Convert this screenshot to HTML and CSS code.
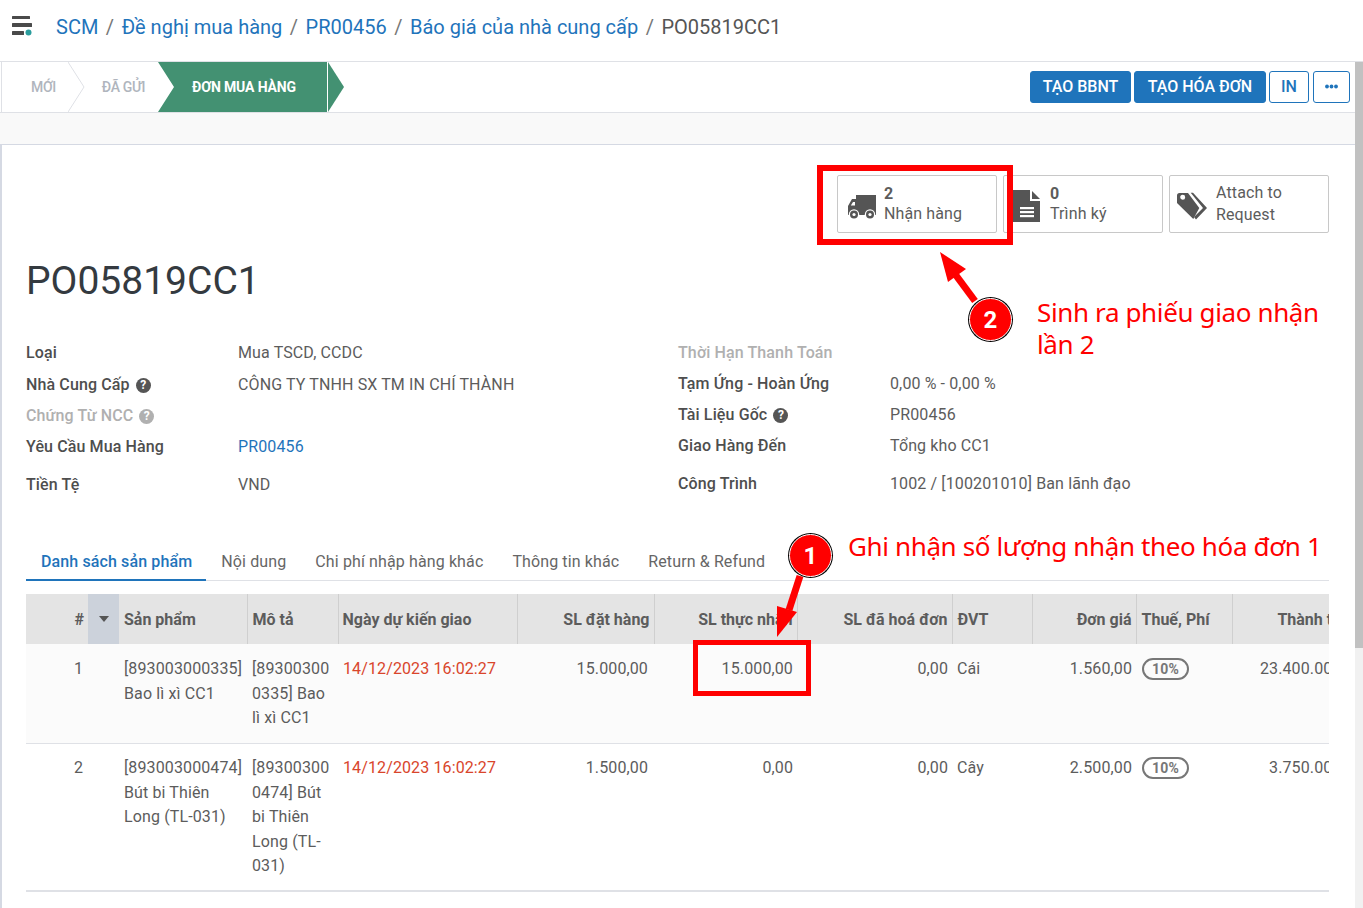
FILE: index.html
```html
<!DOCTYPE html>
<html lang="vi">
  <head>
    <meta charset="UTF-8" />
    <meta name="viewport" content="width=device-width, initial-scale=1.0" />
    <title>PO05819CC1</title>
    <link rel="stylesheet" href="styles.css">
  </head>
  <body>
    <header class="topbar">
      <svg class="menu-icon" width="24" height="24" viewBox="0 0 24 24">
        <rect x="0" y="4" width="18" height="3" rx="0.5" fill="#4a4a4a" />
        <rect x="0" y="11" width="20" height="4" rx="0.5" fill="#4a4a4a" />
        <rect x="0" y="19" width="12" height="4" rx="0.5" fill="#4a4a4a" />
        <circle cx="16.5" cy="20.5" r="3" fill="#2a9d9d" />
      </svg>
      <nav class="breadcrumb">
        <a href="#">SCM</a><span class="sep">/</span><a href="#">Đề nghị mua hàng</a><span class="sep">/</span><a href="#">PR00456</a><span class="sep">/</span><a href="#">Báo giá của nhà cung cấp</a><span class="sep">/</span><span class="current">PO05819CC1</span>
      </nav>
    </header>

    <div class="body-wrap">
      <main class="main">
        <div class="controlbar">
          <div class="stages">
            <div class="stage stage-new">MỚI</div>
            <div class="stage stage-sent">ĐÃ GỬI</div>
            <div class="stage stage-active">ĐƠN MUA HÀNG</div>
            <div class="stage-tail"></div>
            <svg class="chevron" width="17" height="50" viewBox="0 0 17 50"><path d="M0 0L16 25L0 50" fill="none" stroke="#dfe1e6" /></svg>
          </div>
          <div class="actions">
            <button class="btn btn-primary btn-bbnt">TẠO BBNT</button>
            <button class="btn btn-primary btn-invoice">TẠO HÓA ĐƠN</button>
            <button class="btn btn-outline btn-print">IN</button>
            <button class="btn btn-outline btn-more">
              <svg width="13" height="5" viewBox="0 0 13 5">
                <circle cx="2" cy="2.500" r="1.900" fill="#1f74bb" />
                <circle cx="6.500" cy="2.500" r="1.900" fill="#1f74bb" />
                <circle cx="11" cy="2.500" r="1.900" fill="#1f74bb" />
              </svg>
            </button>
          </div>
        </div>
        <div class="strip"></div>

        <section class="sheet">
          <div class="smart-buttons">
            <div class="smart-btn">
              <svg class="smart-icon" width="38" height="40" viewBox="0 0 38 40">
                <path d="M10 11H30V31H2V22L6 15H10Z" fill="#555" />
                <path d="M4.800 21.500L7 18H9V21.500Z" fill="#fff" />
                <circle cx="8" cy="30.500" r="5.200" fill="#fff" />
                <circle cx="24" cy="30.500" r="5.200" fill="#fff" />
                <circle cx="8" cy="30.500" r="4" fill="#555" />
                <circle cx="24" cy="30.500" r="4" fill="#555" />
                <circle cx="8" cy="30.500" r="1.600" fill="#fff" />
                <circle cx="24" cy="30.500" r="1.600" fill="#fff" />
              </svg>
              <div class="smart-text"><strong>2</strong><span>Nhận hàng</span></div>
            </div>
            <div class="smart-btn">
              <svg class="smart-icon" width="38" height="40" viewBox="0 0 38 40">
                <path d="M1 6H18V17H28V38H1Z" fill="#555" />
                <path d="M20 7V15H28Z" fill="#555" />
                <rect x="8" y="23" width="14" height="2.200" fill="#fff" />
                <rect x="8" y="27" width="14" height="2.200" fill="#fff" />
                <rect x="8" y="31" width="14" height="2.200" fill="#fff" />
              </svg>
              <div class="smart-text"><strong>0</strong><span>Trình ký</span></div>
            </div>
            <div class="smart-btn">
              <svg class="smart-icon" width="38" height="40" viewBox="0 0 38 40">
                <path d="M-1 11.500A2.500 2.500 0 0 1 1.500 9H10L21.300 24L15.300 35L-1 19ZM4.700 10.800A2.500 2.500 0 1 0 4.710 15.800A2.500 2.500 0 1 0 4.700 10.800Z" fill="#555" fill-rule="evenodd" />
                <path d="M12.700 8.700H15L29 24L18 35.500L16 33L25 24Z" fill="#555" />
              </svg>
              <div class="smart-text smart-text-plain"><span>Attach to</span><span>Request</span></div>
            </div>
          </div>

          <h1 class="title">PO05819CC1</h1>

          <div class="fields">
            <div class="field-group">
              <div class="field"><label>Loại</label><span>Mua TSCD, CCDC</span></div>
              <div class="field field-nudge"><label>Nhà Cung Cấp <i class="help">?</i></label><span>CÔNG TY TNHH SX TM IN CHÍ THÀNH</span></div>
              <div class="field"><label class="muted">Chứng Từ NCC <i class="help help-muted">?</i></label><span></span></div>
              <div class="field field-tall"><label>Yêu Cầu Mua Hàng</label><a href="#">PR00456</a></div>
              <div class="field"><label>Tiền Tệ</label><span>VND</span></div>
            </div>
            <div class="field-group">
              <div class="field"><label class="muted">Thời Hạn Thanh Toán</label><span></span></div>
              <div class="field"><label>Tạm Ứng - Hoàn Ứng</label><span>0,00 % - 0,00 %</span></div>
              <div class="field"><label>Tài Liệu Gốc <i class="help">?</i></label><span>PR00456</span></div>
              <div class="field field-tall"><label>Giao Hàng Đến</label><span>Tổng kho CC1</span></div>
              <div class="field"><label>Công Trình</label><span>1002 / [100201010] Ban lãnh đạo</span></div>
            </div>
          </div>

          <ul class="tabs">
            <li class="tab active">Danh sách sản phẩm</li>
            <li class="tab">Nội dung</li>
            <li class="tab">Chi phí nhập hàng khác</li>
            <li class="tab">Thông tin khác</li>
            <li class="tab">Return &amp; Refund</li>
          </ul>

          <div class="table-wrap">
            <table class="lines">
              <colgroup>
                <col class="c-num" /><col class="c-handle" /><col class="c-product" /><col class="c-desc" />
                <col class="c-date" /><col class="c-qty" /><col class="c-received" /><col class="c-billed" />
                <col class="c-uom" /><col class="c-price" /><col class="c-tax" /><col class="c-total" />
              </colgroup>
              <thead>
                <tr>
                  <th class="num">#</th>
                  <th class="handle"><span class="caret"></span></th>
                  <th>Sản phẩm</th>
                  <th>Mô tả</th>
                  <th class="th-date">Ngày dự kiến giao</th>
                  <th class="num">SL đặt hàng</th>
                  <th class="num">SL thực nhận</th>
                  <th class="num">SL đã hoá đơn</th>
                  <th>ĐVT</th>
                  <th class="num">Đơn giá</th>
                  <th>Thuế, Phí</th>
                  <th class="num th-total">Thành tiền</th>
                </tr>
              </thead>
              <tbody>
                <tr class="row-first">
                  <td class="idx">1</td>
                  <td></td>
                  <td class="product">[893003000335] Bao lì xì CC1</td>
                  <td>[893003000335] Bao lì xì CC1</td>
                  <td class="late">14/12/2023 16:02:27</td>
                  <td class="num">15.000,00</td>
                  <td class="num">15.000,00</td>
                  <td class="num">0,00</td>
                  <td>Cái</td>
                  <td class="num">1.560,00</td>
                  <td><span class="tax">10%</span></td>
                  <td class="num">23.400.000,00</td>
                </tr>
                <tr class="row-second">
                  <td class="idx">2</td>
                  <td></td>
                  <td class="product">[893003000474] Bút bi Thiên Long (TL-031)</td>
                  <td>[893003000474] Bút bi Thiên Long (TL-031)</td>
                  <td class="late">14/12/2023 16:02:27</td>
                  <td class="num">1.500,00</td>
                  <td class="num">0,00</td>
                  <td class="num">0,00</td>
                  <td>Cây</td>
                  <td class="num">2.500,00</td>
                  <td><span class="tax">10%</span></td>
                  <td class="num">3.750.000,00</td>
                </tr>
              </tbody>
            </table>
          </div>
        </section>
      </main>
      <div class="scrollbar"><div class="thumb"></div></div>
    </div>

    <!-- chu thich do ve len tren anh -->
    <div class="mark mark-box-1"></div>
    <div class="mark mark-box-2"></div>
    <svg class="mark arrows" width="1363" height="908" viewBox="0 0 1363 908">
      <path d="M975 301L955 274" stroke="#f00" stroke-width="7" />
      <path d="M940 252L966 269L948 282z" fill="#f00" />
      <path d="M800 576L789 610" stroke="#f00" stroke-width="7" />
      <path d="M777 637L777 606L797 612z" fill="#f00" />
    </svg>
    <div class="mark badge badge-2">2</div>
    <div class="mark badge badge-1">1</div>
    <div class="mark note note-2">Sinh ra phiếu giao nhận<br />lần 2</div>
    <div class="mark note note-1">Ghi nhận số lượng nhận theo hóa đơn 1</div>
  </body>
</html>
```

FILE: styles.css
```css
* {
  box-sizing: border-box;
}

html,
body {
  height: 908px;
  margin: 0;
  overflow: hidden;
}

body {
  position: relative;
  font-family: Roboto, "Liberation Sans", sans-serif;
  font-size: 15px;
  line-height: 24px;
  letter-spacing: 0.12px;
  color: #5c5c5c;
  background: #fff;
}

a {
  color: #1f74bb;
  text-decoration: none;
}

.topbar {
  display: flex;
  align-items: center;
  height: 62px;
  padding: 0 0 8px 12px;
  border-bottom: 1px solid #dfe1e6;
}

.menu-icon {
  margin-bottom: 5px;
}

.breadcrumb {
  margin-left: 20px;
  font-size: 20px;
  line-height: 28px;
  letter-spacing: 0;
  white-space: nowrap;
}

.breadcrumb .sep {
  margin: 0 7.5px;
  color: #777;
}

.breadcrumb .current {
  color: #555;
}

.body-wrap {
  display: flex;
  height: 846px;
}

.main {
  flex: 1;
  min-width: 0;
}

.scrollbar {
  width: 8px;
  background: #f1f1f1;
}

.thumb {
  height: 586px;
  background: #c1c1c1;
}

.controlbar {
  display: flex;
  justify-content: space-between;
  align-items: center;
  height: 51px;
  padding: 0 5px 0 1px;
  border-bottom: 1px solid #dfe1e6;
}

.stages {
  position: relative;
  display: flex;
  height: 50px;
  border-left: 1px solid #dfe1e6;
  font-size: 14px;
  font-weight: 500;
  letter-spacing: -0.3px;
  line-height: 50px;
}

.stage {
  color: #b0b5bd;
  text-align: center;
}

.stage-new {
  width: 83px;
}

.stage-sent {
  width: 73px;
  padding-left: 4px;
}

.stage-active {
  width: 169px;
  padding-left: 3px;
  font-weight: 700;
  letter-spacing: -0.15px;
  color: #fff;
  background: #439172;
  clip-path: polygon(0 0, 100% 0, 100% 100%, 0 100%, 16px 50%);
}

.stage-tail {
  width: 16px;
  margin-left: 1px;
  background: #439172;
  clip-path: polygon(0 0, 100% 50%, 0 100%);
}

.chevron {
  position: absolute;
  left: 66px;
  top: 0;
}

.actions {
  display: flex;
  height: 32px;
  gap: 3px;
}

.btn {
  height: 32px;
  padding: 0 0 2px;
  border-radius: 3px;
  font-family: inherit;
  font-size: 16px;
  font-weight: 500;
  letter-spacing: 0;
}

.btn-primary {
  color: #fff;
  background: #1f74bb;
  border: 1px solid #1f74bb;
}

.btn-outline {
  color: #1f74bb;
  background: #fff;
  border: 1px solid #1f74bb;
}

.btn-bbnt {
  width: 101px;
}

.btn-invoice {
  width: 132px;
}

.btn-print {
  width: 40px;
}

.btn-more {
  width: 37px;
  margin-left: 1px;
  padding: 0 0 1px;
}

.btn-more svg {
  display: block;
  margin: 0 auto;
}

.strip {
  height: 31px;
  background: #f9f9f9;
}

.sheet {
  height: 764px;
  padding: 30px 26px 0 24px;
  border-top: 1px solid #d5d9e3;
  border-left: 2px solid #d5d9e3;
}

.smart-buttons {
  display: flex;
  justify-content: flex-end;
  gap: 6px;
}

.smart-btn {
  display: flex;
  align-items: center;
  width: 160px;
  height: 58px;
  padding-left: 8px;
  border: 1px solid #c8c8c8;
  border-radius: 2px;
  font-size: 16px;
  line-height: 20px;
}

.smart-icon {
  flex: none;
  overflow: visible;
}

.smart-text {
  display: flex;
  flex-direction: column;
}

.smart-text strong {
  font-weight: 700;
}

.smart-text-plain {
  line-height: 22px;
}

.title {
  margin: 24px 0 0;
  font-size: 39px;
  font-weight: 400;
  line-height: 48px;
  letter-spacing: 0;
  color: #343a40;
}

.fields {
  display: grid;
  grid-template-columns: 652px 1fr;
  margin-top: 32px;
}

.field {
  display: flex;
  align-items: center;
  height: 31px;
  font-size: 16px;
}

.field-nudge {
  margin-top: 1px;
}

.field-tall {
  height: 38px;
  padding-bottom: 7px;
}

.field label {
  flex: none;
  width: 212px;
  font-weight: 500;
  color: #4e4e4e;
}

.field label.muted {
  color: #b0b0b0;
}

.help {
  display: inline-block;
  width: 15px;
  height: 15px;
  margin-left: 2px;
  border-radius: 50%;
  background: #555;
  color: #fff;
  font-size: 12px;
  font-style: normal;
  font-weight: 700;
  line-height: 15px;
  text-align: center;
  vertical-align: 1px;
}

.help-muted {
  background: #b0b0b0;
}

.tabs {
  display: flex;
  margin: 43px 0 0;
  padding: 0;
  list-style: none;
  border-bottom: 1px solid #dfe1e6;
}

.tab {
  height: 38px;
  margin-bottom: -1px;
  padding: 7px 14px 0 15px;
  font-size: 16px;
  color: #666;
}

.tab.active {
  padding: 7px 14px 0 15px;
  font-weight: 500;
  color: #1f74bb;
  border-bottom: 2px solid #1f74bb;
}

.table-wrap {
  overflow: hidden;
  margin-top: 13px;
  border-bottom: 1px solid #dfe1e6;
}

.lines {
  width: 1341px;
  table-layout: fixed;
  border-collapse: collapse;
  font-size: 16px;
  line-height: 24.5px;
}

.c-num { width: 62px; }
.c-handle { width: 31px; }
.c-product { width: 128px; }
.c-desc { width: 91px; }
.c-date { width: 179px; }
.c-qty { width: 137px; }
.c-received { width: 143px; }
.c-billed { width: 155px; }
.c-uom { width: 80px; }
.c-price { width: 104px; }
.c-tax { width: 96px; }
.c-total { width: 135px; }

.lines th {
  height: 50px;
  padding: 2px 5px 0;
  background: #e4e4e4;
  border-left: 1px solid #cfcfcf;
  font-weight: 700;
  font-size: 16px;
  letter-spacing: 0;
  text-align: left;
  color: #5c5c5c;
  white-space: nowrap;
  overflow: hidden;
}

.lines th:first-child,
.lines th.handle,
.lines th.handle + th {
  border-left: 0;
}

.lines th.handle {
  padding: 0;
  background: #ccd2db;
  text-align: center;
}

.lines th.th-date {
  padding-left: 4px;
}

.lines th.num,
.lines td.num {
  text-align: right;
}

.lines th.num {
  padding-right: 4px;
}

.lines th.th-total {
  padding-right: 13px;
}

.caret {
  display: inline-block;
  border-top: 6px solid #555;
  border-left: 5px solid transparent;
  border-right: 5px solid transparent;
  vertical-align: 2px;
}

.lines td {
  padding: 13px 5px 12.5px;
  vertical-align: top;
  border-bottom: 1px solid #dfe1e6;
  word-break: break-word;
  overflow-wrap: anywhere;
}

.lines .row-first td {
  background: #fbfbfb;
}

.lines .row-second td {
  padding: 12px 5px 11.5px;
}

.lines td.product {
  padding-right: 2px;
}

.lines td.idx {
  padding-right: 5px;
  text-align: right;
}

.lines td.late {
  color: #d9452b;
  white-space: nowrap;
}

.lines td.num {
  padding-right: 4px;
  white-space: nowrap;
}

.lines td.num:nth-child(6) {
  padding-right: 6px;
}

.tax {
  display: inline-block;
  width: 47px;
  height: 22px;
  margin-left: 1px;
  border: 2px solid #777;
  border-radius: 11px;
  font-size: 14px;
  font-weight: 700;
  line-height: 18px;
  text-align: center;
  color: #777;
}

.mark {
  position: absolute;
}

.mark-box-1 {
  left: 817px;
  top: 165px;
  width: 196px;
  height: 80px;
  border: 6px solid #f00;
}

.mark-box-2 {
  left: 693px;
  top: 640px;
  width: 118px;
  height: 56px;
  border: 5px solid #f00;
}

.arrows {
  left: 0;
  top: 0;
}

.badge {
  width: 43px;
  height: 43px;
  border-radius: 50%;
  background: #f00;
  border: 1px solid #fff;
  box-shadow: 0 0 0 1px #000;
  color: #fff;
  font-size: 24px;
  font-weight: 700;
  line-height: 42px;
  text-align: center;
}

.badge-2 {
  left: 969px;
  top: 298px;
}

.badge-1 {
  left: 789px;
  top: 534px;
}

.note {
  color: #f00;
  font-family: "Noto Sans", "DejaVu Sans", sans-serif;
  font-size: 26px;
  letter-spacing: -0.37px;
  line-height: 32px;
  white-space: nowrap;
}

.note-2 {
  left: 1037px;
  top: 296px;
}

.note-1 {
  left: 848px;
  top: 530px;
}
```
